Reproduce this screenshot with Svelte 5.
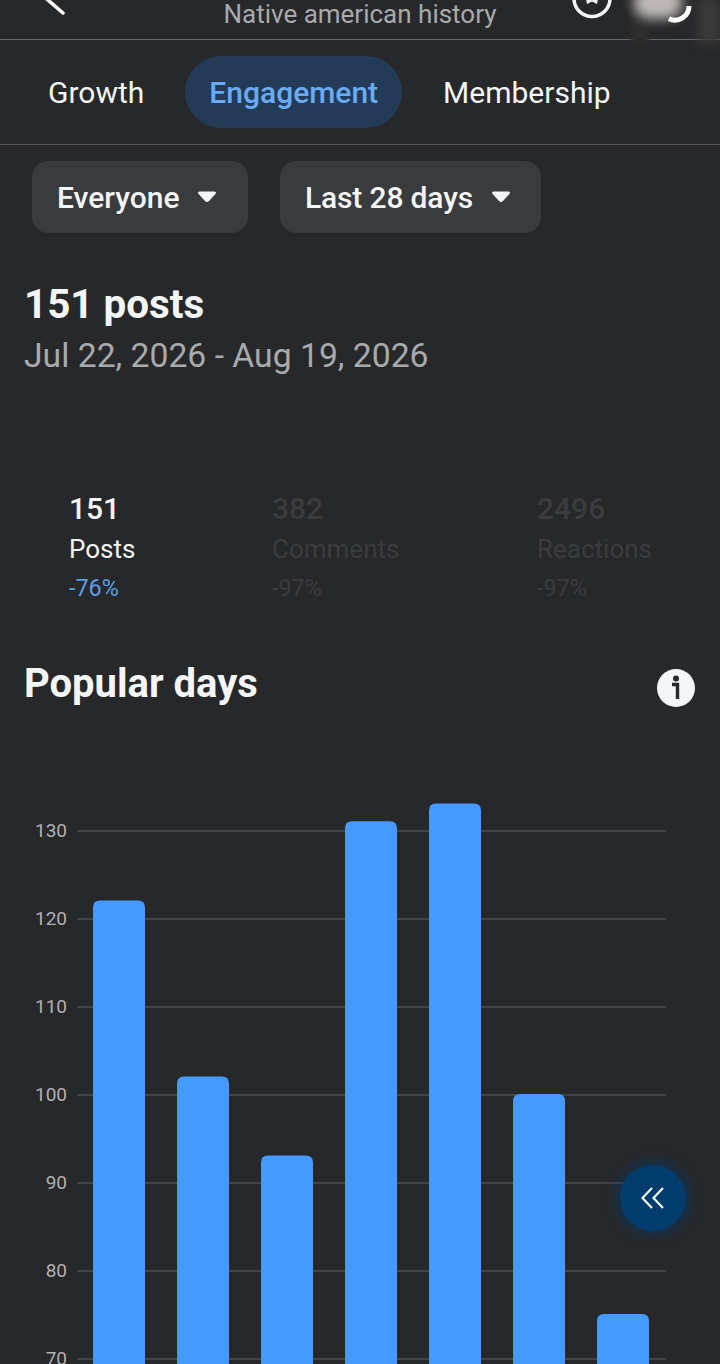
<script>
  const tabs = [
    { label: "Growth" },
    { label: "Engagement", active: true },
    { label: "Membership" },
  ];
  const filters = ["Everyone", "Last 28 days"];
  const stats = [
    { value: "151", label: "Posts", change: "-76%", active: true },
    { value: "382", label: "Comments", change: "-97%" },
    { value: "2496", label: "Reactions", change: "-97%" },
  ];

  const ticks = [130, 120, 110, 100, 90, 80, 70];
  const bars = [122, 102, 93, 131, 133, 100, 75];
  const yFor = (v) => 47 + (130 - v) * 8.8;
</script>

<div class="page">
  <header class="topbar">
    <svg class="back" width="44" height="40" viewBox="0 0 44 40">
      <path d="M18 -6 L40 13" fill="none" stroke="#fff" stroke-width="3.5" stroke-linecap="round" />
    </svg>
    <span class="title">Native american history</span>
    <svg class="star" width="44" height="40" viewBox="0 0 44 40">
      <circle cx="22" cy="-1.5" r="18" fill="none" stroke="#f4f5f6" stroke-width="3.5" />
      <path d="M16 -1 L28 -1 L27 4 L22 1.5 L17 4 Z" fill="#f4f5f6" />
    </svg>
    <div class="smudge-left"></div>
    <div class="smudge"></div>
    <div class="smudge-right"></div>
    <svg class="gear" width="40" height="40" viewBox="0 0 40 40">
      <path d="M29 6 A14 14 0 0 1 9 18.7" fill="none" stroke="#fff" stroke-width="5" />
    </svg>
  </header>

  <nav class="tabs">
    {#each tabs as tab}
      <div class="tab" class:active={tab.active}>{tab.label}</div>
    {/each}
  </nav>

  <div class="filters">
    {#each filters as f}
      <div class="filter">
        <span>{f}</span>
        <svg width="20" height="12" viewBox="0 0 20 12">
          <path d="M3 .5 H17 Q20 .5 18.4 3 L12 10 Q10 12 8 10 L1.6 3 Q0 .5 3 .5 Z" fill="#f4f5f6" />
        </svg>
      </div>
    {/each}
  </div>

  <section class="summary">
    <h1>151 posts</h1>
    <p>Jul 22, 2026 - Aug 19, 2026</p>
  </section>

  <section class="stats">
    {#each stats as s}
      <div class="stat" class:active={s.active}>
        <div class="value">{s.value}</div>
        <div class="label">{s.label}</div>
        <div class="change">{s.change}</div>
      </div>
    {/each}
  </section>

  <section class="popular">
    <h2>Popular days</h2>
    <svg width="38" height="38" viewBox="0 0 38 38">
      <circle cx="19" cy="19" r="19" fill="#f4f5f6" />
      <circle cx="19" cy="9.5" r="3" fill="#27282a" />
      <path d="M15 15.5 H20.5 V30" fill="none" stroke="#27282a" stroke-width="3.4" />
    </svg>
  </section>

  <svg class="chart" width="720" height="620" viewBox="0 0 720 620">
    {#each ticks as t}
      <line x1="77" x2="666" y1={yFor(t) + 1} y2={yFor(t) + 1} class="grid" />
      <text x="67" y={yFor(t) + 6.5} class="tick">{t}</text>
    {/each}
    {#each bars as b, i}
      <path
        class="bar"
        d="M{93 + i * 84} 620 V{yFor(b) + 7} q0 -7 7 -7 h38 q7 0 7 7 V620 Z"
      />
    {/each}
  </svg>

  <button class="fab" aria-label="Collapse">
    <svg width="26" height="26" viewBox="0 0 26 26">
      <path d="M12 3 L2.5 13 L12 23 M23 3 L13.5 13 L23 23" fill="none" stroke="#f4f5f6" stroke-width="2.2" />
    </svg>
  </button>
</div>

<style>
  :global(body) {
    margin: 0;
    background: #27282a;
  }

  .page {
    position: relative;
    width: 720px;
    height: 1364px;
    overflow: hidden;
    background: #27282a;
    color: #f4f5f6;
    font-family: Roboto, "Liberation Sans", sans-serif;
  }

  .topbar {
    position: relative;
    height: 39px;
    border-bottom: 1px solid #68696b;
    display: flex;
    justify-content: center;
  }

  .title {
    font-size: 26px;
    line-height: 28px;
    color: #a9aaac;
  }

  .back {
    position: absolute;
    left: 23px;
    top: 0;
  }

  .star {
    position: absolute;
    left: 570px;
    top: 0;
  }

  .gear {
    position: absolute;
    left: 660px;
    top: 0;
  }

  .smudge {
    position: absolute;
    left: 634px;
    top: -14px;
    width: 48px;
    height: 33px;
    border-radius: 40%;
    background: #bdb8b6;
    filter: blur(6px);
  }

  .smudge-left {
    position: absolute;
    left: 631px;
    top: 6px;
    width: 18px;
    height: 38px;
    background: #2d2d2e;
    filter: blur(2px);
  }

  .smudge-right {
    position: absolute;
    left: 698px;
    top: -2px;
    width: 22px;
    height: 46px;
    background: #3a3a3b;
    filter: blur(5px);
  }

  .tabs {
    display: flex;
    align-items: center;
    gap: 17px;
    height: 104px;
    padding-left: 24px;
    border-bottom: 1px solid #59595b;
  }

  .tab {
    height: 72px;
    display: flex;
    align-items: center;
    padding: 0 24px;
    border-radius: 36px;
    font-size: 30px;
    color: #f4f5f6;
  }

  .tab.active {
    background: #233b57;
    color: #69abf3;
    font-weight: 500;
  }

  .filters {
    display: flex;
    gap: 32px;
    padding: 16px 32px 0;
  }

  .filter {
    height: 72px;
    display: flex;
    align-items: center;
    gap: 18px;
    padding: 0 30.5px 0 25px;
    border-radius: 16px;
    background: #3a3b3d;
    font-size: 30px;
    font-weight: 500;
  }

  .filter + .filter {
    letter-spacing: -0.15px;
  }

  .summary {
    padding: 50px 24px 0;
  }

  .summary h1 {
    margin: 0;
    font-size: 40.4px;
    line-height: 44px;
    font-weight: 700;
  }

  .summary p {
    margin: 9px 0 0;
    font-size: 33.7px;
    line-height: 40px;
    color: #a9aaac;
  }

  .stats {
    display: flex;
    margin-top: 115px;
    padding-left: 69px;
  }

  .stat {
    color: #3b3c3e;
  }

  .stat:nth-child(1) {
    width: 203px;
  }

  .stat:nth-child(2) {
    width: 265px;
  }

  .stat.active {
    color: #f4f5f6;
  }

  .value {
    font-size: 30px;
    line-height: 36px;
    font-weight: 500;
  }

  .label {
    margin-top: 4px;
    font-size: 26px;
    line-height: 36px;
  }

  .change {
    margin-top: 3px;
    font-size: 23.4px;
    line-height: 36px;
  }

  .stat.active .change {
    color: #5a9fe9;
  }

  .popular {
    display: flex;
    justify-content: space-between;
    align-items: flex-start;
    margin-top: 56px;
    padding: 0 25px 0 24px;
  }

  .popular h2 {
    margin: 0;
    font-size: 40px;
    line-height: 44px;
    font-weight: 700;
  }

  .popular svg {
    margin-top: 7px;
  }

  .chart {
    display: block;
    margin-top: 76px;
  }

  .grid {
    stroke: #606163;
    stroke-width: 1;
  }

  .tick {
    fill: #b0b1b3;
    font-size: 19px;
    text-anchor: end;
  }

  .bar {
    fill: #4599ff;
  }

  .fab {
    position: absolute;
    left: 620px;
    top: 1165px;
    width: 66px;
    height: 66px;
    padding: 0;
    border: 0;
    border-radius: 50%;
    background: #023d6e;
    box-shadow: 0 0 10px 7px rgba(2, 61, 110, 0.38);
    display: flex;
    align-items: center;
    justify-content: center;
  }
</style>
